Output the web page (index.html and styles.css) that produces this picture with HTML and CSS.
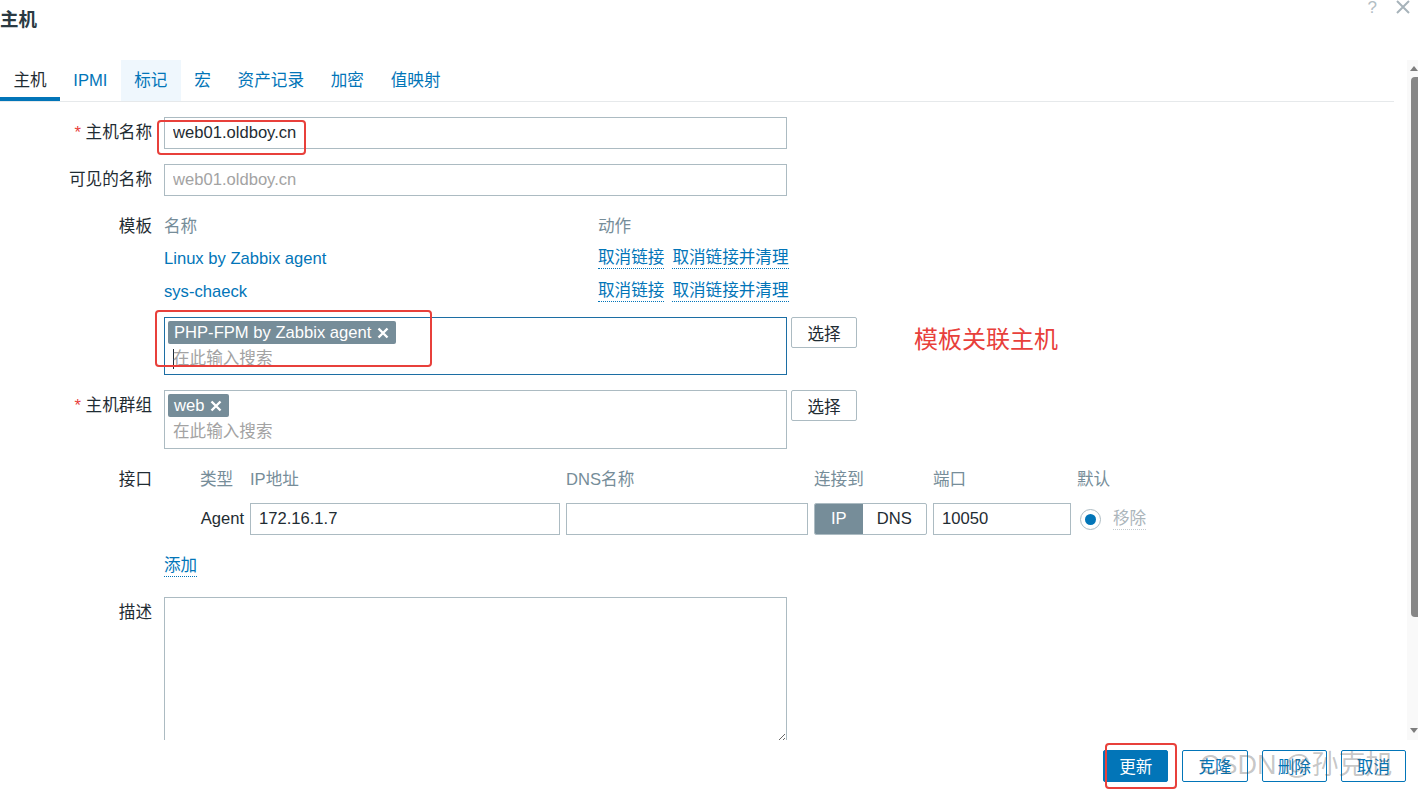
FILE: index.html
```html
<!DOCTYPE html>
<html lang="zh-CN">
<head>
    <meta charset="UTF-8">
    <meta name="viewport" content="width=device-width, initial-scale=1.0">
    <title>主机</title>
    <link rel="stylesheet" href="styles.css">
</head>
<body>
    <div class="dialog">
        <div class="dialog-head">
            <h1>主机</h1>
            <div class="head-icons">
                <span class="icon-help">?</span>
                <svg class="icon-close" width="14" height="14" viewBox="0 0 14 14"><path d="M1 1 L13 13 M13 1 L1 13" stroke="#a7b3ba" stroke-width="2"/></svg>
            </div>
        </div>

        <div class="dialog-body">
            <div class="body-scroll">
                <ul class="tabs">
                    <li class="tab selected">主机</li>
                    <li class="tab">IPMI</li>
                    <li class="tab hover">标记</li>
                    <li class="tab">宏</li>
                    <li class="tab">资产记录</li>
                    <li class="tab">加密</li>
                    <li class="tab">值映射</li>
                </ul>

                <div class="form-grid">
                    <div class="form-label"><span class="req">*</span> 主机名称</div>
                    <div class="form-field">
                        <input class="text-input" type="text" value="web01.oldboy.cn">
                    </div>

                    <div class="form-label">可见的名称</div>
                    <div class="form-field">
                        <input class="text-input" type="text" placeholder="web01.oldboy.cn">
                    </div>

                    <div class="form-label">模板</div>
                    <div class="form-field">
                        <div class="tpl-table">
                            <div class="tpl-head">名称</div>
                            <div class="tpl-head">动作</div>
                            <div class="tpl-row"><span class="link">Linux by Zabbix agent</span></div>
                            <div class="tpl-row actions"><span class="link dotted">取消链接</span><span class="link dotted">取消链接并清理</span></div>
                            <div class="tpl-row"><span class="link">sys-chaeck</span></div>
                            <div class="tpl-row actions"><span class="link dotted">取消链接</span><span class="link dotted">取消链接并清理</span></div>
                        </div>
                        <div class="ms-line">
                            <div class="multiselect focused">
                                <div class="chips">
                                    <span class="chip">PHP-FPM by Zabbix agent<svg width="12" height="12" viewBox="0 0 12 12"><path d="M1.5 1.5 L10.5 10.5 M10.5 1.5 L1.5 10.5" stroke="#fff" stroke-width="2.4"/></svg></span>
                                </div>
                                <div class="ms-search"><span class="caret"></span>在此输入搜索</div>
                            </div>
                            <button class="btn-alt" type="button">选择</button>
                        </div>
                    </div>

                    <div class="form-label"><span class="req">*</span> 主机群组</div>
                    <div class="form-field">
                        <div class="ms-line">
                            <div class="multiselect">
                                <div class="chips">
                                    <span class="chip">web<svg width="12" height="12" viewBox="0 0 12 12"><path d="M1.5 1.5 L10.5 10.5 M10.5 1.5 L1.5 10.5" stroke="#fff" stroke-width="2.4"/></svg></span>
                                </div>
                                <div class="ms-search">在此输入搜索</div>
                            </div>
                            <button class="btn-alt" type="button">选择</button>
                        </div>
                    </div>

                    <div class="form-label">接口</div>
                    <div class="form-field">
                        <div class="iface-grid">
                            <div></div>
                            <div class="iface-head">类型</div>
                            <div class="iface-head">IP地址</div>
                            <div class="iface-head">DNS名称</div>
                            <div class="iface-head">连接到</div>
                            <div class="iface-head">端口</div>
                            <div class="iface-head">默认</div>

                            <div></div>
                            <div class="iface-type">Agent</div>
                            <input class="text-input" type="text" value="172.16.1.7">
                            <input class="text-input" type="text" value="">
                            <div class="toggle">
                                <span class="toggle-opt on">IP</span>
                                <span class="toggle-opt">DNS</span>
                            </div>
                            <input class="text-input" type="text" value="10050">
                            <div class="iface-default">
                                <span class="radio"><span class="radio-dot"></span></span>
                                <span class="link-disabled">移除</span>
                            </div>
                        </div>
                        <div class="add-line"><span class="link dotted">添加</span></div>
                    </div>

                    <div class="form-label">描述</div>
                    <div class="form-field">
                        <textarea class="textarea"></textarea>
                    </div>
                </div>
            </div>

            <div class="scrollbar">
                <div class="sb-arrow"><span class="tri-up"></span></div>
                <div class="sb-thumb"></div>
                <div class="sb-space"></div>
                <div class="sb-arrow"><span class="tri-down"></span></div>
            </div>
        </div>

        <div class="dialog-foot">
            <button class="btn primary" type="button">更新</button>
            <button class="btn" type="button">克隆</button>
            <button class="btn" type="button">删除</button>
            <button class="btn" type="button">取消</button>
        </div>

        <!-- annotations drawn over the screenshot -->
        <div class="mark mark-name"></div>
        <div class="mark mark-tpl"></div>
        <div class="mark mark-save"></div>
        <div class="note">模板关联主机</div>
        <div class="watermark">CSDN @孙克旭</div>
    </div>
</body>
</html>
```

FILE: styles.css
```css
:root {
    --text: #1f2c33;
    --muted: #768d99;
    --link: #0275b8;
    --border: #acbbc2;
    --red: #e8403b;
}

* {
    margin: 0;
    padding: 0;
    box-sizing: border-box;
}

body {
    font-family: "Liberation Sans", "Noto Sans CJK SC", sans-serif;
    font-size: 16.6px;
    color: var(--text);
    background: #fff;
    width: 1418px;
    height: 791px;
    overflow: hidden;
}

.dialog {
    position: relative;
    width: 1418px;
    height: 791px;
}

/* header */
.dialog-head {
    height: 60px;
    display: flex;
    justify-content: space-between;
    align-items: flex-start;
}

.dialog-head h1 {
    font-size: 18.5px;
    font-weight: bold;
    line-height: 40px;
    color: #2b3a42;
}

.head-icons {
    display: flex;
    align-items: flex-start;
    gap: 19px;
    padding-right: 8px;
}

.icon-help {
    font-size: 17px;
    line-height: 16px;
    color: #b3bec4;
}

/* body + scrollbar */
.dialog-body {
    display: flex;
    height: 680px;
}

.body-scroll {
    flex: 1;
    overflow: hidden;
    padding-right: 13px;
}

.scrollbar {
    width: 11px;
    background: #f9f9f9;
    display: flex;
    flex-direction: column;
}

.sb-arrow {
    height: 16px;
    display: flex;
    align-items: center;
    padding-left: 3px;
}

.tri-up, .tri-down {
    width: 0;
    height: 0;
    border-left: 4px solid transparent;
    border-right: 4px solid transparent;
}

.tri-up {
    border-bottom: 5px solid #7d7d7d;
}

.tri-down {
    border-top: 5px solid #7d7d7d;
}

.sb-thumb {
    height: 540px;
    margin-top: 1px;
    margin-left: 4px;
    background: #878787;
    border-radius: 4px 0 0 4px;
}

.sb-space {
    flex: 1;
}

.scrollbar .sb-arrow:last-child {
    margin-bottom: 2px;
}

/* tabs */
.tabs {
    list-style: none;
    display: flex;
    height: 42px;
    border-bottom: 1px solid #e6e9eb;
}

.tab {
    padding: 0 13.4px;
    line-height: 41px;
    color: var(--link);
}

.tab.selected {
    color: var(--text);
    box-shadow: inset 0 -4px 0 var(--link);
}

.tab.hover {
    background: #eff7fd;
}

/* form */
.form-grid {
    display: grid;
    grid-template-columns: 152px 1fr;
    column-gap: 12px;
    row-gap: 15px;
    padding-top: 15px;
}

.form-label {
    text-align: right;
    line-height: 32px;
    white-space: nowrap;
}

.req {
    color: var(--red);
}

.text-input {
    font: inherit;
    color: var(--text);
    height: 32px;
    width: 623px;
    border: 1px solid var(--border);
    border-radius: 0;
    padding: 0 8px;
    outline: none;
    background: #fff;
}

.text-input::placeholder {
    color: #a3a3a3;
}

.link {
    color: var(--link);
    white-space: nowrap;
}

.link.dotted {
    display: inline-block;
    line-height: 20px;
    border-bottom: 1px dotted var(--link);
}

/* templates */
.tpl-table {
    display: grid;
    grid-template-columns: 434px 260px;
}

.tpl-head {
    color: var(--muted);
    line-height: 31px;
}

.tpl-row {
    height: 33px;
    display: flex;
    align-items: center;
    white-space: nowrap;
}

.tpl-row.actions {
    gap: 8px;
}

.ms-line {
    display: flex;
    align-items: flex-start;
    gap: 4px;
    margin-top: 9px;
}

.form-grid .form-field > .ms-line:first-child {
    margin-top: 0;
}

.multiselect {
    width: 623px;
    height: 59px;
    border: 1px solid var(--border);
    padding: 3px;
}

.multiselect.focused {
    border-color: #1c6ea4;
    height: 58px;
}

.chips {
    display: flex;
    height: 24px;
}

.chip {
    display: inline-flex;
    align-items: center;
    gap: 6px;
    height: 23px;
    padding: 0 7px 0 6px;
    background: var(--muted);
    color: #fff;
    border-radius: 2px;
}

.ms-search {
    display: flex;
    align-items: center;
    height: 24px;
    padding-left: 5px;
    color: #a3a3a3;
}

.caret {
    width: 1px;
    height: 20px;
    background: var(--text);
    margin-top: 4px;
    margin-right: -1px;
}

.btn-alt {
    font: inherit;
    color: var(--text);
    width: 66px;
    height: 31px;
    background: #fff;
    border: 1px solid var(--border);
    border-radius: 2px;
}

/* interfaces */
.iface-grid {
    display: grid;
    grid-template-columns: 30px 44px 310px 242px 113px 138px auto;
    column-gap: 6px;
    row-gap: 7px;
    align-items: center;
}

.iface-grid .text-input {
    width: 100%;
}

.iface-head {
    color: var(--muted);
    line-height: 32px;
    white-space: nowrap;
}

.iface-type {
    text-align: right;
}

.toggle {
    display: flex;
    height: 32px;
    border: 1px solid var(--border);
    border-radius: 2px;
    overflow: hidden;
}

.toggle-opt {
    display: flex;
    align-items: center;
    justify-content: center;
    width: 64px;
}

.toggle-opt.on {
    width: 48px;
    background: var(--muted);
    color: #fff;
}

.iface-default {
    display: flex;
    align-items: center;
    gap: 12px;
    padding-left: 3px;
}

.radio {
    width: 21px;
    height: 21px;
    border: 1px solid var(--border);
    border-radius: 50%;
    display: flex;
    align-items: center;
    justify-content: center;
}

.radio-dot {
    width: 11px;
    height: 11px;
    border-radius: 50%;
    background: var(--link);
}

.link-disabled {
    color: #abb5bb;
    line-height: 20px;
    border-bottom: 1px dotted #c3cbd0;
}

.add-line {
    margin-top: 21px;
    margin-bottom: 4px;
    height: 22px;
}

.textarea {
    display: block;
    width: 623px;
    height: 146px;
    border: 1px solid var(--border);
    border-radius: 0;
    font: inherit;
    outline: none;
    resize: vertical;
}

/* footer */
.dialog-foot {
    display: flex;
    justify-content: flex-end;
    gap: 14px;
    padding: 10px 12px 0 0;
}

.btn {
    font: inherit;
    height: 32px;
    padding: 0 15px;
    background: #fff;
    color: var(--link);
    border: 1px solid var(--link);
    border-radius: 2px;
}

.btn.primary {
    background: var(--link);
    color: #fff;
}

/* annotations */
.mark {
    position: absolute;
    border: 2px solid var(--red);
    border-radius: 4px;
}

.mark-name {
    left: 157px;
    top: 120px;
    width: 149px;
    height: 35px;
}

.mark-tpl {
    left: 155px;
    top: 310px;
    width: 277px;
    height: 57px;
}

.mark-save {
    left: 1105px;
    top: 743px;
    width: 72px;
    height: 46px;
}

.note {
    position: absolute;
    left: 914px;
    top: 324px;
    font-size: 24px;
    line-height: 32px;
    color: var(--red);
}

.watermark {
    position: absolute;
    left: 1200px;
    top: 748px;
    font-size: 27px;
    line-height: 34px;
    color: rgba(80, 80, 80, 0.32);
    white-space: nowrap;
}
```
